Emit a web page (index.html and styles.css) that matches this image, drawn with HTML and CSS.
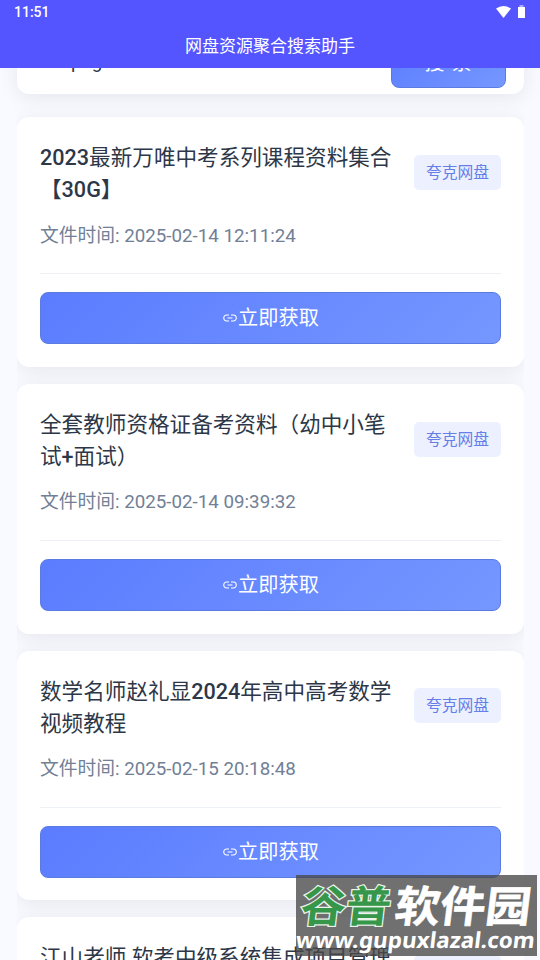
FILE: index.html
```html
<!DOCTYPE html>
<html lang="zh-CN">
<head>
<meta charset="utf-8">
<title>网盘资源聚合搜索助手</title>
<link rel="stylesheet" href="styles.css">
</head>
<body>
<svg class="defs" width="0" height="0" aria-hidden="true">
  <symbol id="link" viewBox="0 0 14 8"><path d="M6 1H3.700a3 3 0 0 0 0 6H6M8 1h2.300a3 3 0 0 1 0 6H8M4.500 4h5" fill="none" stroke="currentColor" stroke-width="1.1"/></symbol>
</svg>
<header class="header">
  <div class="status"><span>11:51</span>
    <svg class="status-icons" width="30" height="14" viewBox="0 0 30 14"><path d="M0 3.500Q7.500-1.500 15 3.500L7.500 13Z" fill="#fff"/><path d="M22 2h7v11h-7z" fill="#fff"/><path d="M23.500 0h4v2h-4z" fill="#aaaaff"/></svg>
  </div>
  <h1 class="app-title">网盘资源聚合搜索助手</h1>
</header>
<main class="page">
  <section class="search"><span class="query">png</span><button class="search-btn">搜 索</button></section>
  <div class="results">
    <article class="card">
      <div class="top"><h2 class="title"><b>2023</b>最新万唯中考系列课程资料集合<b>【30G】</b></h2><span class="tag">夸克网盘</span></div>
      <p class="meta">文件时间: 2025-02-14 12:11:24</p>
      <div class="action"><button class="get"><svg class="link"><use href="#link"/></svg>立即获取</button></div>
    </article>
    <article class="card">
      <div class="top"><h2 class="title">全套教师资格证备考资料（幼中小笔试<b>+</b>面试）</h2><span class="tag">夸克网盘</span></div>
      <p class="meta">文件时间: 2025-02-14 09:39:32</p>
      <div class="action"><button class="get"><svg class="link"><use href="#link"/></svg>立即获取</button></div>
    </article>
    <article class="card">
      <div class="top"><h2 class="title">数学名师赵礼显<b>2024</b>年高中高考数学视频教程</h2><span class="tag">夸克网盘</span></div>
      <p class="meta">文件时间: 2025-02-15 20:18:48</p>
      <div class="action"><button class="get"><svg class="link"><use href="#link"/></svg>立即获取</button></div>
    </article>
    <article class="card">
      <div class="top"><h2 class="title">江山老师 软考中级系统集成项目管理</h2><span class="tag">夸克网盘</span></div>
    </article>
  </div>
</main>
<aside class="watermark">
  <svg width="241" height="82" viewBox="0 0 241 82">
    <g class="wm-name">
      <text class="green" x="5" y="47" textLength="90" lengthAdjust="spacingAndGlyphs">谷普</text>
      <text class="white" x="99" y="47" textLength="136" lengthAdjust="spacingAndGlyphs">软件园</text>
    </g>
    <text class="wm-url" x="1" y="73" textLength="239" lengthAdjust="spacingAndGlyphs">www.gupuxlazal.com</text>
  </svg>
</aside>
</body>
</html>
```

FILE: styles.css
```css
* { box-sizing: border-box; }
body {
  margin: 0;
  height: 960px;
  overflow: hidden;
  background: #f8faff;
  font-family: Roboto, "Noto Sans CJK SC", sans-serif;
  color: #2d3748;
}
h1, h2, p { margin: 0; font-weight: 400; }
button { border: 1px solid #5c7be0; color: #fff; font-family: inherit; background: linear-gradient(135deg, #5b7cff, #7597ff); }
.defs { position: absolute; }
.header { position: relative; z-index: 2; height: 68px; background: #5555ff; color: #fff; }
.status { display: flex; justify-content: space-between; height: 24px; padding: 4px 14px 0; font-size: 14px; font-weight: 500; line-height: 17px; }
.status-icons { margin: 1px 0 0; }
.app-title { font-size: 17px; line-height: 44px; text-align: center; }
.page { height: 892px; padding: 0 16px 0 17px; }
.search {
  display: flex;
  align-items: flex-end;
  justify-content: space-between;
  height: 70px;
  margin-top: -44px;
  padding: 0 18px 6px 54px;
  border-radius: 12px;
  background: #fff;
  box-shadow: 0 4px 20px rgba(0, 0, 0, .08);
}
.query { font-size: 18.7px; line-height: 22px; padding-bottom: 15px; }
.search-btn { width: 115px; height: 52px; padding: 0 0 2px; border-radius: 8px; font-size: 20px; letter-spacing: 1px; }
.results { display: flex; flex-direction: column; gap: 17.2px; height: 866px; padding-top: 23.4px; overflow: hidden; }
.card {
  flex: none;
  height: 249.500px;
  padding: 24px 23px 23px;
  border-radius: 12px;
  background: #fff;
  box-shadow: 0 4px 20px rgba(0, 0, 0, .08);
}
.top { display: flex; justify-content: space-between; align-items: flex-start; height: 65px; padding-top: 1px; }
.title { width: 358px; font-size: 21.6px; line-height: 32px; }
.title b { font-weight: 500; }
.tag { flex: none; width: 87px; height: 35px; margin-top: 12.5px; border-radius: 5px; background: #edf1ff; color: #667fe8; font-size: 15.8px; line-height: 35px; text-align: center; }
.meta { height: 68px; padding-top: 16.3px; border-bottom: 1px solid #edf0f4; color: #718096; font-size: 18.75px; line-height: 26px; }
.action { padding-top: 17.8px; }
.get { display: flex; align-items: center; justify-content: center; width: 100%; height: 52px; padding: 0 0 3px 1px; border-radius: 8px; font-size: 20.2px; }
.link { width: 14px; height: 8px; margin: 3px 1px 0 0; }
.watermark { position: absolute; z-index: 3; left: 296px; top: 875px; width: 241px; height: 81px; background: rgba(72, 72, 72, .78); overflow: hidden; }
.watermark svg { display: block; }
.wm-name { font: 700 43px "Noto Sans CJK SC", sans-serif; transform: skewX(-7deg) translateX(4px); }
.green { fill: #36964a; stroke: #e9f3e9; stroke-width: 2.5px; paint-order: stroke; }
.white { fill: #fff; stroke: #fff; stroke-width: .6px; }
.wm-url { font: 700 22px "Noto Sans", sans-serif; fill: #fff; transform: skewX(-7deg) translateX(7px); }
```
